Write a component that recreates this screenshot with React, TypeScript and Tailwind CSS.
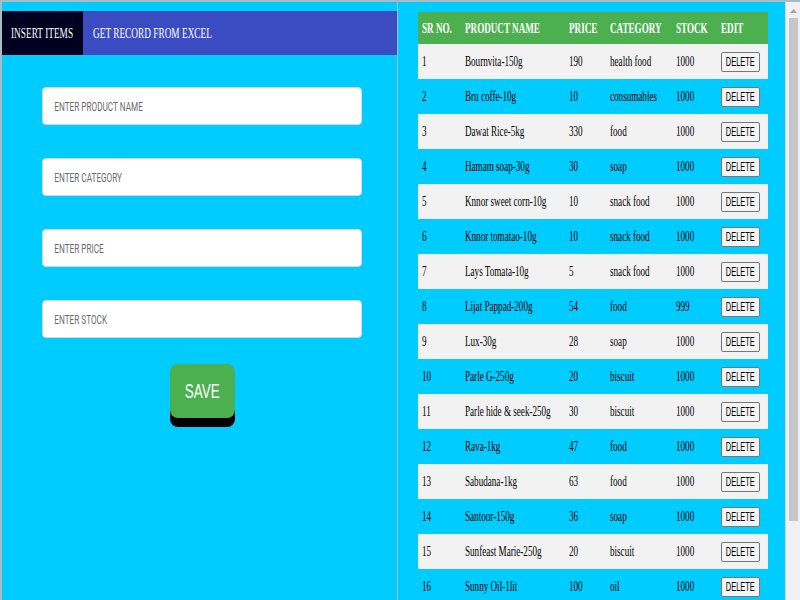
import { useState } from "react";

interface Item {
  id: number;
  name: string;
  price: number;
  category: string;
  stock: number;
}

const items: Item[] = [
  { id: 1, name: "Bournvita-150g", price: 190, category: "health food", stock: 1000 },
  { id: 2, name: "Bru coffe-10g", price: 10, category: "consumables", stock: 1000 },
  { id: 3, name: "Dawat Rice-5kg", price: 330, category: "food", stock: 1000 },
  { id: 4, name: "Hamam soap-30g", price: 30, category: "soap", stock: 1000 },
  { id: 5, name: "Knnor sweet corn-10g", price: 10, category: "snack food", stock: 1000 },
  { id: 6, name: "Knnor tomatao-10g", price: 10, category: "snack food", stock: 1000 },
  { id: 7, name: "Lays Tomata-10g", price: 5, category: "snack food", stock: 1000 },
  { id: 8, name: "Lijat Pappad-200g", price: 54, category: "food", stock: 999 },
  { id: 9, name: "Lux-30g", price: 28, category: "soap", stock: 1000 },
  { id: 10, name: "Parle G-250g", price: 20, category: "biscuit", stock: 1000 },
  { id: 11, name: "Parle hide & seek-250g", price: 30, category: "biscuit", stock: 1000 },
  { id: 12, name: "Rava-1kg", price: 47, category: "food", stock: 1000 },
  { id: 13, name: "Sabudana-1kg", price: 63, category: "food", stock: 1000 },
  { id: 14, name: "Santoor-150g", price: 36, category: "soap", stock: 1000 },
  { id: 15, name: "Sunfeast Marie-250g", price: 20, category: "biscuit", stock: 1000 },
  { id: 16, name: "Sunny Oil-1lit", price: 100, category: "oil", stock: 1000 },
];

// the screenshot's lettering is narrow, so text is squeezed sideways
const sq = "inline-block origin-left scale-x-[0.65] whitespace-nowrap";
const cols = "grid grid-cols-[43px_104px_41px_66px_45px_51px] items-center";

function Field({ label }: { label: string }) {
  return (
    <div className="w-[320px] h-[38px] ml-[40px] bg-white border border-[#cfd8dc] rounded-[4px] overflow-hidden flex items-center">
      <input
        className="w-[500px] h-full origin-left scale-x-[0.63] pl-[18px] outline-none bg-transparent text-[13px] font-['Roboto',sans-serif] placeholder:text-[#6b6b6b]"
        placeholder={label}
      />
    </div>
  );
}

function InsertForm() {
  return (
    <div className="flex flex-col gap-[33px] pt-[32px]">
      <Field label="ENTER PRODUCT NAME" />
      <Field label="ENTER CATEGORY" />
      <Field label="ENTER PRICE" />
      <Field label="ENTER STOCK" />
      <div className="w-[320px] ml-[40px] flex justify-center -mt-[7px]">
        <button className="w-[65px] h-[54px] rounded-[8px] bg-[#4caf50] shadow-[0_9px_0_#000] text-white text-[21px] font-['Liberation_Sans',Arial,sans-serif]">
          <span className="inline-block scale-x-[0.64]">SAVE</span>
        </button>
      </div>
    </div>
  );
}

function RecordTable() {
  const [rows, setRows] = useState<Item[]>(items);

  return (
    <div className="w-[350px] font-['Liberation_Serif',serif] text-[14px] text-black">
      <div className={`${cols} h-[32px] bg-[#4caf50] text-white font-bold`}>
        <div className="pl-1"><span className={sq}>SR NO.</span></div>
        <div className="pl-1"><span className={sq}>PRODUCT NAME</span></div>
        <div className="pl-1"><span className={sq}>PRICE</span></div>
        <div className="pl-1"><span className={sq}>CATEGORY</span></div>
        <div className="pl-1"><span className={sq}>STOCK</span></div>
        <div className="pl-1"><span className={sq}>EDIT</span></div>
      </div>
      {rows.map((r, i) => (
        <div key={r.id} className={`${cols} h-[35px] ${i % 2 === 0 ? "bg-[#f2f2f2]" : ""}`}>
          <div className="pl-1"><span className={sq}>{r.id}</span></div>
          <div className="pl-1"><span className={sq}>{r.name}</span></div>
          <div className="pl-1"><span className={sq}>{r.price}</span></div>
          <div className="pl-1"><span className={sq}>{r.category}</span></div>
          <div className="pl-1"><span className={sq}>{r.stock}</span></div>
          <div className="pl-1">
            <button
              onClick={() => setRows(rows.filter(x => x.id !== r.id))}
              className="w-[39px] h-[20px] flex items-center justify-center border border-[#767676] rounded-[2px] bg-[#f4f4f4] text-[12px] leading-none text-black font-['Liberation_Sans',Arial,sans-serif]"
            >
              <span className="shrink-0 inline-block scale-x-[0.62] whitespace-nowrap">DELETE</span>
            </button>
          </div>
        </div>
      ))}
    </div>
  );
}

export default function App() {
  const [tab, setTab] = useState(0);

  return (
    <div className="flex h-[600px] overflow-hidden bg-[#00ccff] font-['Liberation_Serif',serif]">
      <div className="w-[398px] h-full border-l-2 border-t-2 border-r border-[#a7bcc6] pt-[9px]">
        <div className="flex h-[44px] bg-[#3b4bc1] text-white text-[15px]">
          <button
            onClick={() => setTab(0)}
            className={`w-[81px] pl-[9px] text-left ${tab === 0 ? "bg-[#00001f]" : ""}`}
          >
            <span className="inline-block origin-left scale-x-[0.62] whitespace-nowrap">INSERT ITEMS</span>
          </button>
          <button
            onClick={() => setTab(1)}
            className={`pl-[10px] pr-3 text-left ${tab === 1 ? "bg-[#00001f]" : ""}`}
          >
            <span className="inline-block origin-left scale-x-[0.62] whitespace-nowrap">GET RECORD FROM EXCEL</span>
          </button>
        </div>
        <InsertForm />
      </div>
      <div className="flex-1 flex h-full border-t-2 border-[#a7bcc6]">
        <div className="flex-1 pl-[20px] pt-[10px] overflow-hidden">
          <RecordTable />
        </div>
        <div className="w-[15px] h-full bg-[#f0f0f0] border-l border-[#d6d6d6] flex flex-col items-center">
          <svg width="7" height="4" viewBox="0 0 7 4" className="mt-[7px]">
            <path d="M0 4 L3.5 0 L7 4 Z" fill="#a3a3a3" />
          </svg>
          <div className="w-[9px] h-[503px] mt-[5px] bg-[#c6c6c6]" />
        </div>
      </div>
    </div>
  );
}
